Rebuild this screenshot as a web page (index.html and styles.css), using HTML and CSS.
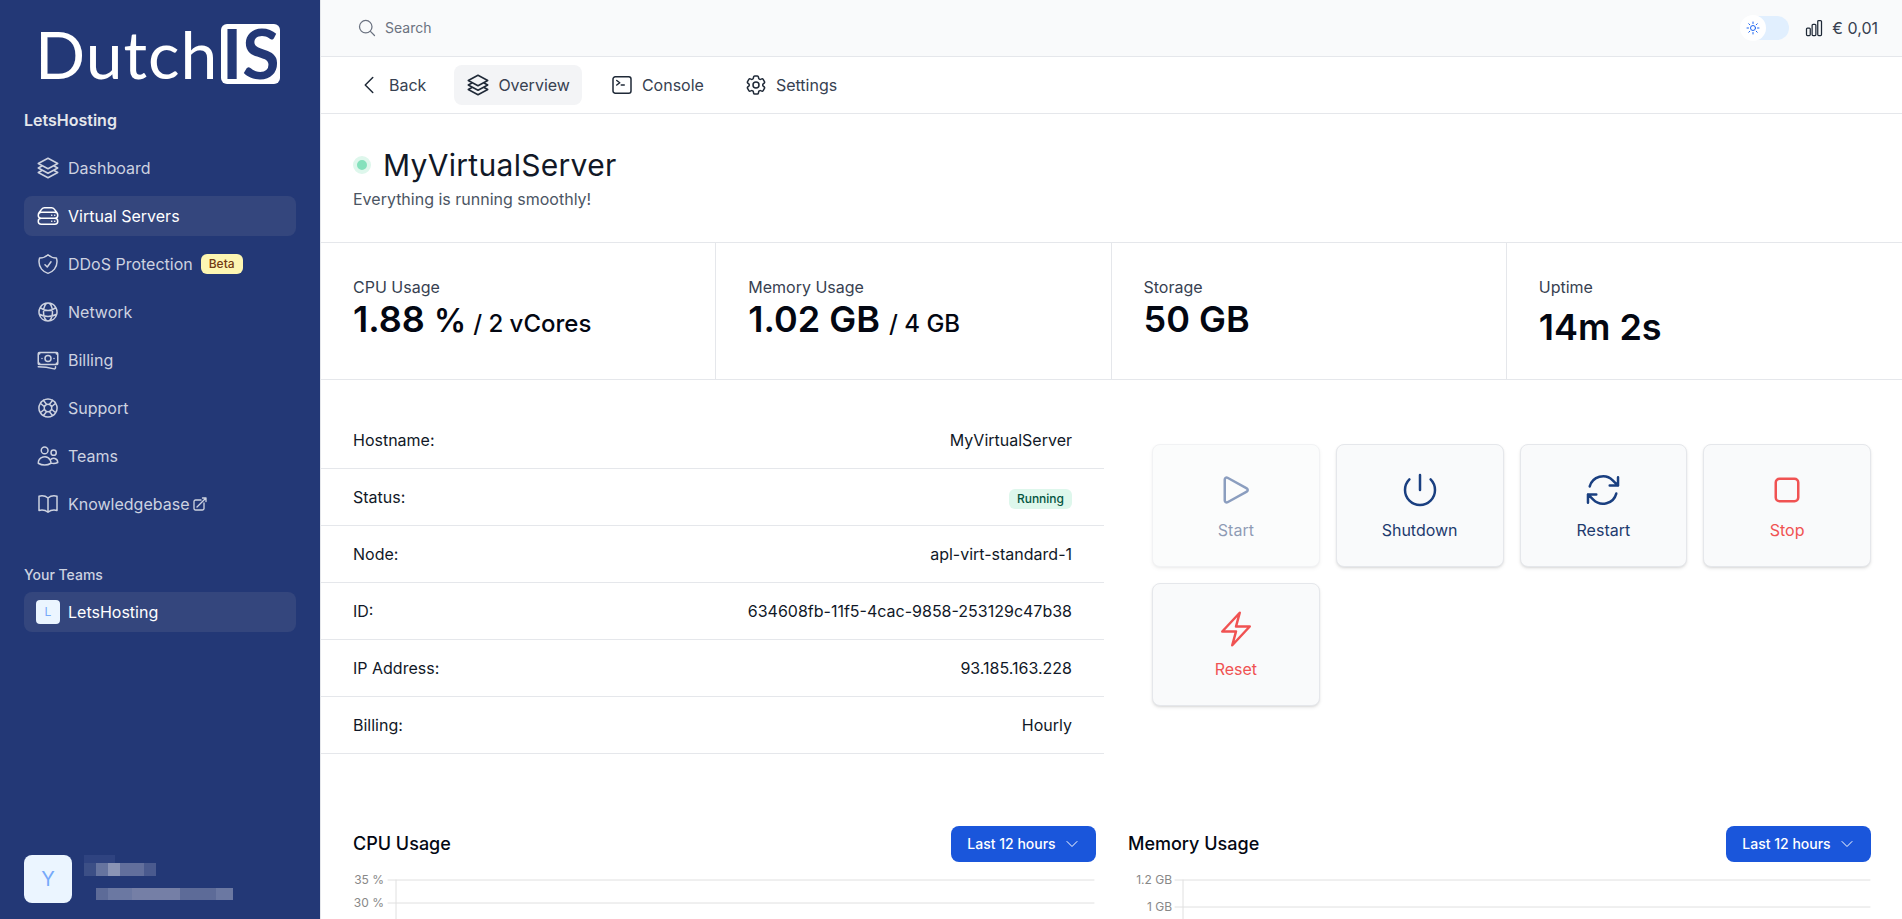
FILE: index.html
```html
<!DOCTYPE html>
<html lang="en">
  <head>
    <meta charset="UTF-8" />
    <meta name="viewport" content="width=device-width, initial-scale=1.0" />
    <title>MyVirtualServer - DutchIS</title>
    <link rel="stylesheet" href="styles.css">
  </head>
  <body>
    <aside class="sidebar">
      <div class="logo">
        <span class="logo-text">Dutch</span>
        <span class="logo-box">IS</span>
      </div>
      <div class="sidebar-heading">LetsHosting</div>
      <nav class="side-nav">
        <a class="side-item">
          <svg class="icon" viewBox="0 0 24 24"><path d="M6.429 9.75L2.25 12l4.179 2.25m0-4.5l5.571 3 5.571-3m-11.142 0L2.25 7.5 12 2.25l9.75 5.25-4.179 2.25m0 0L21.75 12l-4.179 2.25m0 0l4.179 2.25L12 21.75 2.25 16.5l4.179-2.25m11.142 0l-5.571 3-5.571-3"/></svg>
          Dashboard
        </a>
        <a class="side-item active">
          <svg class="icon" viewBox="0 0 24 24"><path d="M5.25 14.25h13.5m-13.5 0a3 3 0 01-3-3m3 3a3 3 0 100 6h13.5a3 3 0 100-6m-16.5-3a3 3 0 013-3h13.5a3 3 0 013 3m-19.5 0a4.5 4.5 0 01.9-2.7L5.737 5.1a3.375 3.375 0 012.7-1.35h7.126c1.062 0 2.062.5 2.7 1.35l2.587 3.45a4.5 4.5 0 01.9 2.7m0 0a3 3 0 01-3 3m0 3h.008v.008h-.008v-.008zm0-6h.008v.008h-.008v-.008zm-3 6h.008v.008h-.008v-.008zm0-6h.008v.008h-.008v-.008z"/></svg>
          Virtual Servers
        </a>
        <a class="side-item">
          <svg class="icon" viewBox="0 0 24 24"><path d="M9 12.75L11.25 15 15 9.75m-3-7.036A11.959 11.959 0 013.598 6 11.99 11.99 0 003 9.749c0 5.592 3.824 10.29 9 11.623 5.176-1.332 9-6.03 9-11.622 0-1.31-.21-2.571-.598-3.751h-.152c-3.196 0-6.1-1.248-8.25-3.285z"/></svg>
          DDoS Protection
          <span class="beta">Beta</span>
        </a>
        <a class="side-item">
          <svg class="icon" viewBox="0 0 24 24"><path d="M12 21a9.004 9.004 0 008.716-6.747M12 21a9.004 9.004 0 01-8.716-6.747M12 21c2.485 0 4.5-4.03 4.5-9S14.485 3 12 3m0 18c-2.485 0-4.5-4.03-4.5-9S9.515 3 12 3m0 0a8.997 8.997 0 017.843 4.582M12 3a8.997 8.997 0 00-7.843 4.582m15.686 0A11.953 11.953 0 0112 10.5c-2.998 0-5.74-1.1-7.843-2.918m15.686 0A8.959 8.959 0 0121 12c0 .778-.099 1.533-.284 2.253m0 0A17.919 17.919 0 0112 16.5c-3.162 0-6.133-.815-8.716-2.247m0 0A9.015 9.015 0 013 12c0-1.605.42-3.113 1.157-4.418"/></svg>
          Network
        </a>
        <a class="side-item">
          <svg class="icon" viewBox="0 0 24 24"><path d="M2.25 18.75a60.07 60.07 0 0115.797 2.101c.727.198 1.453-.342 1.453-1.096V18.75M3.75 4.5v.75A.75.75 0 013 6h-.75m0 0v-.375c0-.621.504-1.125 1.125-1.125H20.25M2.25 6v9m18-10.5v.75c0 .414.336.75.75.75h.75m-1.5-1.5h.375c.621 0 1.125.504 1.125 1.125v9.75c0 .621-.504 1.125-1.125 1.125h-.375m1.5-1.5H21a.75.75 0 00-.75.75v.75m0 0H3.75m0 0h-.375a1.125 1.125 0 01-1.125-1.125V15m1.5 1.5v-.75A.75.75 0 003 15h-.75M15 10.5a3 3 0 11-6 0 3 3 0 016 0zm3 0h.008v.008H18V10.5zm-12 0h.008v.008H6V10.5z"/></svg>
          Billing
        </a>
        <a class="side-item">
          <svg class="icon" viewBox="0 0 24 24"><path d="M16.712 4.33a9.027 9.027 0 011.652 1.306c.51.51.944 1.064 1.306 1.652M16.712 4.33l-3.448 4.138m3.448-4.138a9.014 9.014 0 00-9.424 0M19.67 7.288l-4.138 3.448m4.138-3.448a9.014 9.014 0 010 9.424m-4.138-5.976a3.736 3.736 0 00-.88-1.388 3.737 3.737 0 00-1.388-.88m2.268 2.268a3.765 3.765 0 010 2.528m-2.268-4.796a3.765 3.765 0 00-2.528 0m4.796 4.796c-.181.506-.475.982-.88 1.388a3.736 3.736 0 01-1.388.88m2.268-2.268l4.138 3.448m0 0a9.027 9.027 0 01-1.306 1.652c-.51.51-1.064.944-1.652 1.306m0 0l-3.448-4.138m3.448 4.138a9.014 9.014 0 01-9.424 0m5.976-4.138a3.765 3.765 0 01-2.528 0m0 0a3.736 3.736 0 01-1.388-.88 3.737 3.737 0 01-.88-1.388m2.268 2.268L7.288 19.67m0 0a9.024 9.024 0 01-1.652-1.306 9.027 9.027 0 01-1.306-1.652m0 0l4.138-3.448M4.33 16.712a9.014 9.014 0 010-9.424m4.138 5.976a3.765 3.765 0 010-2.528m0 0c.181-.506.475-.982.88-1.388a3.736 3.736 0 011.388-.88m-2.268 2.268L4.33 7.288m6.406 1.18L7.288 4.33m0 0a9.024 9.024 0 00-1.652 1.306A9.025 9.025 0 004.33 7.288"/></svg>
          Support
        </a>
        <a class="side-item">
          <svg class="icon" viewBox="0 0 24 24"><path d="M15 19.128a9.38 9.38 0 002.625.372 9.337 9.337 0 004.121-.952 4.125 4.125 0 00-7.533-2.493M15 19.128v-.003c0-1.113-.285-2.16-.786-3.07M15 19.128v.106A12.318 12.318 0 018.624 21c-2.331 0-4.512-.645-6.374-1.766l-.001-.109a6.375 6.375 0 0111.964-3.07M12 6.375a3.375 3.375 0 11-6.75 0 3.375 3.375 0 016.75 0zm8.25 2.25a2.625 2.625 0 11-5.25 0 2.625 2.625 0 015.25 0z"/></svg>
          Teams
        </a>
        <a class="side-item">
          <svg class="icon" viewBox="0 0 24 24"><path d="M12 6.042A8.967 8.967 0 006 3.75c-1.052 0-2.062.18-3 .512v14.25A8.987 8.987 0 016 18c2.305 0 4.408.867 6 2.292m0-14.25a8.966 8.966 0 016-2.292c1.052 0 2.062.18 3 .512v14.25A8.987 8.987 0 0018 18a8.967 8.967 0 00-6 2.292m0-14.25v14.25"/></svg>
          <span class="kb-label">
            Knowledgebase
            <svg class="icon-small" viewBox="0 0 24 24"><path d="M13.5 6H5.25A2.25 2.25 0 003 8.25v10.5A2.25 2.25 0 005.25 21h10.5A2.25 2.25 0 0018 18.75V10.5m-10.5 6L21 3m0 0h-5.25M21 3v5.25"/></svg>
          </span>
        </a>
      </nav>
      <div class="teams-heading">Your Teams</div>
      <a class="side-item active">
        <span class="team-avatar">L</span>
        LetsHosting
      </a>
      <div class="user">
        <div class="user-avatar">Y</div>
        <div class="user-info">
          <div class="mosaic-top"></div>
          <div class="mosaic-name"></div>
          <div class="mosaic-mail"></div>
        </div>
      </div>
    </aside>

    <div class="main">
      <header class="topbar">
        <div class="search">
          <svg class="icon-search" viewBox="0 0 24 24"><path d="M21 21l-5.197-5.197m0 0A7.5 7.5 0 105.196 5.196a7.5 7.5 0 0010.607 10.607z"/></svg>
          Search
        </div>
        <div class="topbar-right">
          <div class="toggle">
            <span class="toggle-knob">
              <svg viewBox="0 0 24 24"><path d="M12 3v2.25m6.364.386l-1.591 1.591M21 12h-2.25m-.386 6.364l-1.591-1.591M12 18.75V21m-4.773-4.227l-1.591 1.591M5.25 12H3m4.227-4.773L5.636 5.636M15.75 12a3.75 3.75 0 11-7.5 0 3.75 3.75 0 017.5 0z"/></svg>
            </span>
          </div>
          <div class="balance">
            <svg class="icon-bars" viewBox="0 0 24 24"><path d="M3 13.125C3 12.504 3.504 12 4.125 12h2.25c.621 0 1.125.504 1.125 1.125v6.75C7.5 20.496 6.996 21 6.375 21h-2.25A1.125 1.125 0 013 19.875v-6.75zM9.75 8.625c0-.621.504-1.125 1.125-1.125h2.25c.621 0 1.125.504 1.125 1.125v11.25c0 .621-.504 1.125-1.125 1.125h-2.25a1.125 1.125 0 01-1.125-1.125V8.625zM16.5 4.125c0-.621.504-1.125 1.125-1.125h2.25C20.496 3 21 3.504 21 4.125v15.75c0 .621-.504 1.125-1.125 1.125h-2.25a1.125 1.125 0 01-1.125-1.125V4.125z"/></svg>
            € 0,01
          </div>
        </div>
      </header>

      <nav class="tabs">
        <a class="tab">
          <svg class="icon" viewBox="0 0 24 24"><path d="M15.75 19.5L8.25 12l7.5-7.5"/></svg>
          Back
        </a>
        <a class="tab current">
          <svg class="icon" viewBox="0 0 24 24"><path d="M6.429 9.75L2.25 12l4.179 2.25m0-4.5l5.571 3 5.571-3m-11.142 0L2.25 7.5 12 2.25l9.75 5.25-4.179 2.25m0 0L21.75 12l-4.179 2.25m0 0l4.179 2.25L12 21.75 2.25 16.5l4.179-2.25m11.142 0l-5.571 3-5.571-3"/></svg>
          Overview
        </a>
        <a class="tab">
          <svg class="icon" viewBox="0 0 24 24"><path d="M6.75 7.5l3 2.25-3 2.25m4.5 0h3m-9 8.25h13.5A2.25 2.25 0 0021 18V6a2.25 2.25 0 00-2.25-2.25H5.25A2.25 2.25 0 003 6v12a2.25 2.25 0 002.25 2.25z"/></svg>
          Console
        </a>
        <a class="tab">
          <svg class="icon" viewBox="0 0 24 24"><path d="M9.594 3.94c.09-.542.56-.94 1.11-.94h2.593c.55 0 1.02.398 1.11.94l.213 1.281c.063.374.313.686.645.87.074.04.147.083.22.127.324.196.72.257 1.075.124l1.217-.456a1.125 1.125 0 011.37.49l1.296 2.247a1.125 1.125 0 01-.26 1.431l-1.003.827c-.293.24-.438.613-.431.992a6.759 6.759 0 010 .255c-.007.378.138.75.43.99l1.005.828c.424.35.534.954.26 1.43l-1.298 2.247a1.125 1.125 0 01-1.369.491l-1.217-.456c-.355-.133-.75-.072-1.076.124a6.57 6.57 0 01-.22.128c-.331.183-.581.495-.644.869l-.213 1.28c-.09.543-.56.941-1.11.941h-2.594c-.55 0-1.02-.398-1.11-.94l-.213-1.281c-.062-.374-.312-.686-.644-.87a6.52 6.52 0 01-.22-.127c-.325-.196-.72-.257-1.076-.124l-1.217.456a1.125 1.125 0 01-1.369-.49l-1.297-2.247a1.125 1.125 0 01.26-1.431l1.004-.827c.292-.24.437-.613.43-.992a6.932 6.932 0 010-.255c.007-.378-.138-.75-.43-.99l-1.004-.828a1.125 1.125 0 01-.26-1.43l1.297-2.247a1.125 1.125 0 011.37-.491l1.216.456c.356.133.751.072 1.076-.124.072-.044.146-.087.22-.128.332-.183.582-.495.644-.869l.214-1.281z"/><path d="M15 12a3 3 0 11-6 0 3 3 0 016 0z"/></svg>
          Settings
        </a>
      </nav>

      <section class="server-head">
        <div class="server-title">
          <span class="status-dot"></span>
          <h1>MyVirtualServer</h1>
        </div>
        <p>Everything is running smoothly!</p>
      </section>

      <section class="stats">
        <div class="stat">
          <div class="stat-label">CPU Usage</div>
          <div class="stat-value">1.88 <span class="pct">%</span> <small>/ 2 vCores</small></div>
        </div>
        <div class="stat">
          <div class="stat-label">Memory Usage</div>
          <div class="stat-value">1.02 GB <small>/ 4 GB</small></div>
        </div>
        <div class="stat">
          <div class="stat-label">Storage</div>
          <div class="stat-value">50 GB</div>
        </div>
        <div class="stat">
          <div class="stat-label">Uptime</div>
          <div class="stat-value uptime">14m 2s</div>
        </div>
      </section>

      <section class="details">
        <div class="info-table">
          <div class="info-row"><span>Hostname:</span><span>MyVirtualServer</span></div>
          <div class="info-row"><span>Status:</span><span class="running">Running</span></div>
          <div class="info-row"><span>Node:</span><span>apl-virt-standard-1</span></div>
          <div class="info-row"><span>ID:</span><span>634608fb-11f5-4cac-9858-253129c47b38</span></div>
          <div class="info-row"><span>IP Address:</span><span>93.185.163.228</span></div>
          <div class="info-row"><span>Billing:</span><span>Hourly</span></div>
        </div>
        <div class="actions">
          <button class="action disabled">
            <svg viewBox="0 0 24 24"><path d="M5.25 5.653c0-.856.917-1.398 1.667-.986l11.54 6.348a1.125 1.125 0 010 1.971l-11.54 6.347a1.125 1.125 0 01-1.667-.985V5.653z"/></svg>
            Start
          </button>
          <button class="action">
            <svg viewBox="0 0 24 24"><path d="M5.636 5.636a9 9 0 1012.728 0M12 3v9"/></svg>
            Shutdown
          </button>
          <button class="action">
            <svg viewBox="0 0 24 24"><path d="M16.023 9.348h4.992v-.001M2.985 19.644v-4.992m0 0h4.992m-4.993 0l3.181 3.183a8.25 8.25 0 0013.803-3.7M4.031 9.865a8.25 8.25 0 0113.803-3.7l3.181 3.182m0-4.991v4.99"/></svg>
            Restart
          </button>
          <button class="action danger">
            <svg viewBox="0 0 24 24"><path d="M5.25 7.5A2.25 2.25 0 017.5 5.25h9a2.25 2.25 0 012.25 2.25v9a2.25 2.25 0 01-2.25 2.25h-9a2.25 2.25 0 01-2.25-2.25v-9z"/></svg>
            Stop
          </button>
          <button class="action danger">
            <svg viewBox="0 0 24 24"><path d="M3.75 13.5l10.5-11.25L12 10.5h8.25L9.75 21.75 12 13.5H3.75z"/></svg>
            Reset
          </button>
        </div>
      </section>

      <section class="charts">
        <div class="chart">
          <div class="chart-head">
            <h2>CPU Usage</h2>
            <button class="range">
              Last 12 hours
              <svg viewBox="0 0 24 24"><path d="M19.5 8.25l-7.5 7.5-7.5-7.5"/></svg>
            </button>
          </div>
          <svg class="plot" viewBox="0 0 743 50">
            <line class="grid" x1="35" y1="10" x2="741" y2="10"/>
            <line class="grid" x1="35" y1="33" x2="741" y2="33"/>
            <line class="grid" x1="43" y1="10" x2="43" y2="50"/>
            <text x="31" y="14">35 %</text>
            <text x="31" y="37">30 %</text>
          </svg>
        </div>
        <div class="chart">
          <div class="chart-head">
            <h2>Memory Usage</h2>
            <button class="range">
              Last 12 hours
              <svg viewBox="0 0 24 24"><path d="M19.5 8.25l-7.5 7.5-7.5-7.5"/></svg>
            </button>
          </div>
          <svg class="plot" viewBox="0 0 743 50">
            <line class="grid" x1="47" y1="10" x2="742" y2="10"/>
            <line class="grid" x1="47" y1="37" x2="742" y2="37"/>
            <line class="grid" x1="55" y1="10" x2="55" y2="50"/>
            <text x="44" y="14">1.2 GB</text>
            <text x="44" y="41">1 GB</text>
          </svg>
        </div>
      </section>
    </div>
  </body>
</html>
```

FILE: styles.css
```css
* {
  margin: 0;
  padding: 0;
  box-sizing: border-box;
}

body {
  display: flex;
  height: 100vh;
  overflow: hidden;
  background: #fff;
  font-family: Inter, "Noto Sans", sans-serif;
  font-size: 16px;
  line-height: 24px;
  color: #111827;
}

svg {
  fill: none;
  stroke: currentColor;
  stroke-width: 1.5;
  stroke-linecap: round;
  stroke-linejoin: round;
  flex-shrink: 0;
}

.icon {
  width: 24px;
  height: 24px;
}

/* sidebar */
.sidebar {
  width: 320px;
  flex-shrink: 0;
  display: flex;
  flex-direction: column;
  padding: 24px 24px 16px;
  background: #233876;
  color: #cdd2e0;
}

.logo {
  display: flex;
  align-items: center;
  height: 60px;
  padding-left: 11px;
  gap: 3px;
}

.logo-text {
  font-family: Lato, sans-serif;
  font-size: 66px;
  line-height: 60px;
  letter-spacing: 1px;
  color: #fff;
}

.logo-box {
  width: 59px;
  height: 60px;
  border-radius: 6px;
  background: #fff;
  color: #233876;
  font-family: Lato, sans-serif;
  font-size: 68px;
  line-height: 58px;
  font-weight: 700;
  text-align: center;
}

.sidebar-heading {
  margin-top: 24px;
  font-weight: 600;
  color: #e5e7eb;
}

.side-nav {
  display: flex;
  flex-direction: column;
  gap: 8px;
  margin-top: 16px;
}

.side-item {
  display: flex;
  align-items: center;
  gap: 8px;
  height: 40px;
  padding: 0 12px;
  border-radius: 8px;
}

.side-item.active {
  background: #34467d;
  color: #fff;
}

.beta {
  padding: 0 8px;
  border-radius: 6px;
  background: #fdf6b2;
  color: #723b13;
  font-size: 12px;
  line-height: 20px;
  font-weight: 500;
}

.kb-label {
  display: flex;
  align-items: center;
  gap: 3px;
}

.icon-small {
  width: 16px;
  height: 16px;
  stroke-width: 2;
}

.teams-heading {
  margin-top: 41px;
  margin-bottom: 7px;
  font-size: 14px;
  line-height: 20px;
  font-weight: 500;
}

.team-avatar {
  width: 24px;
  height: 24px;
  border-radius: 4px;
  background: #ebf5ff;
  color: #76a9fa;
  font-size: 12px;
  text-align: center;
}

.user {
  display: flex;
  gap: 12px;
  margin-top: auto;
}

.user-avatar {
  width: 48px;
  height: 48px;
  border-radius: 8px;
  background: #ebf5ff;
  color: #76a9fa;
  font-size: 20px;
  line-height: 48px;
  text-align: center;
}

/* pixelated name and mail */
.mosaic-top {
  width: 31px;
  height: 8px;
  background: #2f4380;
}

.mosaic-name {
  width: 72px;
  height: 13px;
  background: linear-gradient(90deg, #3c4f86 0 12px, #66749f 12px 24px, #8a94b5 24px 36px, #626f9c 36px 60px, #4a5a8e 60px);
}

.mosaic-mail {
  width: 137px;
  height: 12px;
  margin-top: 12px;
  margin-left: 12px;
  background: linear-gradient(90deg, #5d6b98 0 12px, #6b78a2 12px 36px, #757fa6 36px 84px, #5d6b98 84px 120px, #6b78a2 120px);
}

/* main column */
.main {
  flex: 1;
  min-width: 0;
  border-left: 1px solid #e5e7eb;
}

.topbar {
  display: flex;
  align-items: center;
  justify-content: space-between;
  height: 57px;
  padding: 0 24px 0 36px;
  background: #f9fafb;
  border-bottom: 1px solid #e5e7eb;
}

.search {
  display: flex;
  align-items: center;
  gap: 8px;
  font-size: 14px;
  color: #6b7280;
}

.icon-search {
  width: 20px;
  height: 20px;
}

.topbar-right {
  display: flex;
  align-items: center;
  gap: 15px;
}

.toggle {
  width: 44px;
  height: 24px;
  margin-left: 5px;
  border-radius: 12px;
  background: #e1effe;
}

.toggle-knob {
  display: flex;
  align-items: center;
  justify-content: center;
  width: 26px;
  height: 26px;
  margin: -1px 0 0 -5px;
  border-radius: 50%;
  background: #fff;
  color: #1c64f2;
}

.toggle-knob svg {
  width: 16px;
  height: 16px;
}

.balance {
  display: flex;
  align-items: center;
  gap: 8px;
  color: #374151;
}

.icon-bars {
  width: 20px;
  height: 20px;
  color: #1f2937;
}

.tabs {
  display: flex;
  align-items: center;
  gap: 16px;
  height: 57px;
  padding-left: 24px;
  border-bottom: 1px solid #e5e7eb;
}

.tab {
  display: flex;
  align-items: center;
  gap: 8px;
  height: 40px;
  padding: 0 12px;
  border-radius: 8px;
  color: #374151;
}

.tab .icon {
  color: #1f2937;
}

.tab.current {
  background: #f3f4f6;
}

.server-head {
  height: 129px;
  padding: 31px 32px 0;
  border-bottom: 1px solid #e5e7eb;
}

.server-title {
  display: flex;
  align-items: center;
  gap: 12px;
}

.status-dot {
  width: 18px;
  height: 18px;
  border: 4px solid #def7ec;
  border-radius: 50%;
  background: #84e1bc;
}

.server-head h1 {
  font-size: 30px;
  line-height: 40px;
  font-weight: 400;
  letter-spacing: 0.3px;
}

.server-head p {
  margin-top: 2px;
  color: #4b5563;
}

.stats {
  display: grid;
  grid-template-columns: repeat(4, 1fr);
  height: 137px;
  border-bottom: 1px solid #e5e7eb;
}

.stat {
  padding: 32px 32px 0;
  border-right: 1px solid #e5e7eb;
}

.stat:last-child {
  border-right: none;
}

.stat-label {
  color: #374151;
}

.stat-value {
  font-size: 36px;
  line-height: 40px;
  font-weight: 600;
  color: #030712;
}

.stat-value small {
  font-size: 24px;
  font-weight: 500;
}

.stat-value .pct {
  font-size: 32px;
  letter-spacing: -2px;
}

.stat-value.uptime {
  margin-top: 8px;
}

.details {
  display: flex;
  height: 446px;
}

.info-table {
  width: 783px;
  flex-shrink: 0;
  padding-top: 32px;
}

.info-row {
  display: flex;
  align-items: center;
  justify-content: space-between;
  height: 57px;
  padding: 0 32px;
  border-bottom: 1px solid #e5e7eb;
}

.running {
  margin-top: 4px;
  padding: 0 8px;
  border-radius: 6px;
  background: #def7ec;
  color: #03543f;
  font-size: 12px;
  line-height: 20px;
  font-weight: 500;
}

.actions {
  flex: 1;
  display: grid;
  grid-template-columns: repeat(4, 1fr);
  grid-auto-rows: 123px;
  align-content: start;
  gap: 16px;
  padding: 64px 31px 0 48px;
}

.action {
  display: flex;
  flex-direction: column;
  align-items: center;
  gap: 8px;
  padding-top: 25px;
  border: 1px solid #e5e7eb;
  border-radius: 8px;
  background: #f9fafb;
  box-shadow: 0 2px 4px -1px rgba(0, 0, 0, 0.12), 0 1px 2px rgba(0, 0, 0, 0.06);
  color: #1e3a6e;
  font: inherit;
}

.action svg {
  width: 40px;
  height: 40px;
  color: #1a3f80;
}

.action.disabled {
  opacity: 0.5;
}

.action.danger,
.action.danger svg {
  color: #f05252;
}

.charts {
  display: grid;
  grid-template-columns: 1fr 1fr;
  gap: 32px;
  padding: 0 31px 0 32px;
}

.chart-head {
  display: flex;
  align-items: center;
  justify-content: space-between;
}

.chart-head h2 {
  font-size: 18px;
  font-weight: 500;
  color: #030712;
}

.range {
  display: flex;
  align-items: center;
  justify-content: center;
  gap: 8px;
  width: 145px;
  height: 36px;
  border: none;
  border-radius: 8px;
  background: #1a56db;
  color: #fff;
  font: inherit;
  font-size: 14px;
  font-weight: 500;
}

.range svg {
  width: 16px;
  height: 16px;
}

.plot {
  display: block;
  width: 100%;
  margin-top: 8px;
  stroke: none;
}

.plot .grid {
  stroke: #e0e0e0;
  stroke-width: 1;
}

.plot text {
  fill: #888;
  font-family: Inter, sans-serif;
  font-size: 12px;
  text-anchor: end;
}
```
